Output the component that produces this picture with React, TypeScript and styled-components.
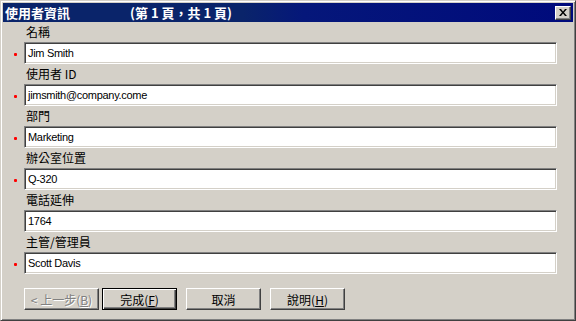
import React from 'react';
import styled, { createGlobalStyle } from 'styled-components';

const GlobalStyle = createGlobalStyle`
  html, body {
    margin: 0;
    padding: 0;
    background: #d4d0c8;
  }
`;

const fields = [
  { label: '名稱', value: 'Jim Smith', required: true },
  { label: '使用者 ID', value: 'jimsmith@company.come', required: true },
  { label: '部門', value: 'Marketing', required: true },
  { label: '辦公室位置', value: 'Q-320', required: true },
  { label: '電話延伸', value: '1764', required: false },
  { label: '主管/管理員', value: 'Scott Davis', required: true },
];

function App() {
  return (
    <>
      <GlobalStyle />
      <Window>
        <TitleBar>
          <TitleText>
            <span>使用者資訊</span>
            <PageInfo>(第 1 頁，共 1 頁)</PageInfo>
          </TitleText>
          <CloseButton aria-label="close">
            <svg width="8" height="7" viewBox="0 0 8 7">
              <path d="M0 0h2l2 2.5L6 0h2L5 3.5 8 7H6L4 4.5 2 7H0l3-3.5z" fill="#000" />
            </svg>
          </CloseButton>
        </TitleBar>
        <Form>
          {fields.map(f => (
            <Row key={f.label}>
              <Label>{f.label}</Label>
              <FieldLine>
                <Marker>{f.required && <Dot />}</Marker>
                <Input>{f.value}</Input>
              </FieldLine>
            </Row>
          ))}
        </Form>
        <ButtonRow>
          <Button disabled>
            &lt; 上一步(<u>B</u>)
          </Button>
          <Button $primary $gap={3}>
            完成(<u>F</u>)
          </Button>
          <Button $gap={9}>取消</Button>
          <Button $gap={9}>
            說明(<u>H</u>)
          </Button>
        </ButtonRow>
      </Window>
    </>
  );
}

export default App;

const Window = styled.div`
  box-sizing: border-box;
  width: 576px;
  height: 321px;
  border: 1px solid;
  border-color: #d4d0c8 #404040 #404040 #d4d0c8;
  box-shadow: inset 1px 1px #ffffff, inset -1px -1px #808080;
  padding: 2px 2px 2px 2px;
  display: flex;
  flex-direction: column;
  font-family: 'Noto Sans CJK TC', 'Liberation Sans', sans-serif;
`;

const TitleBar = styled.div`
  height: 19px;
  display: flex;
  align-items: center;
  justify-content: space-between;
  background: linear-gradient(to right, #0a246a 0, #0a246a 240px, #05177a 300px, #000a7c 100%);
  padding-right: 2px;
`;

const TitleText = styled.div`
  display: flex;
  align-items: center;
  height: 19px;
  padding-left: 2px;
  color: #ffffff;
  font-weight: bold;
  font-size: 13px;
  line-height: 19px;
  white-space: pre;
`;

const PageInfo = styled.span`
  margin-left: 60px;
`;

const CloseButton = styled.div`
  box-sizing: border-box;
  width: 16px;
  height: 14px;
  background: #d4d0c8;
  border: 1px solid;
  border-color: #ffffff #404040 #404040 #ffffff;
  box-shadow: inset -1px -1px #808080;
  display: flex;
  align-items: center;
  justify-content: center;
  padding-right: 1px;
`;

const Form = styled.div`
  display: flex;
  flex-direction: column;
  padding: 0 16px 0 0;
`;

const Row = styled.div`
  display: flex;
  flex-direction: column;
`;

const Label = styled.div`
  height: 20px;
  line-height: 20px;
  padding-left: 23px;
  font-size: 12px;
  color: #000000;
`;

const FieldLine = styled.div`
  display: flex;
`;

const Marker = styled.div`
  width: 21px;
  flex-shrink: 0;
  position: relative;
`;

const Dot = styled.span`
  position: absolute;
  left: 11px;
  top: 11px;
  width: 3px;
  height: 3px;
  border-radius: 1px;
  background: #ff0000;
`;

const Input = styled.div`
  box-sizing: border-box;
  flex: 1;
  height: 22px;
  background: #ffffff;
  border: 1px solid;
  border-color: #808080 #ffffff #ffffff #808080;
  box-shadow: inset 1px 1px #404040, inset -1px -1px #d4d0c8;
  padding: 0 3px;
  font-family: 'Liberation Sans', Arial, sans-serif;
  font-size: 11px;
  letter-spacing: -0.3px;
  line-height: 20px;
  color: #000000;
`;

const ButtonRow = styled.div`
  display: flex;
  padding: 14px 0 0 21px;
`;

const Button = styled.div<{ $primary?: boolean; $gap?: number; disabled?: boolean }>`
  box-sizing: border-box;
  width: 75px;
  height: 22px;
  margin-left: ${p => p.$gap ?? 0}px;
  background: #d4d0c8;
  border: 1px solid;
  border-color: ${p => (p.$primary ? '#000000' : '#ffffff #404040 #404040 #ffffff')};
  box-shadow: ${p =>
    p.$primary
      ? 'inset 1px 1px #ffffff, inset -1px -1px #404040, inset -2px -2px #808080'
      : 'inset -1px -1px #808080'};
  display: flex;
  align-items: center;
  justify-content: center;
  font-size: 12px;
  color: ${p => (p.disabled ? '#808080' : '#000000')};
  text-shadow: ${p => (p.disabled ? '1px 1px #ffffff' : 'none')};
  white-space: pre;

  u {
    text-underline-offset: 1px;
  }
`;
